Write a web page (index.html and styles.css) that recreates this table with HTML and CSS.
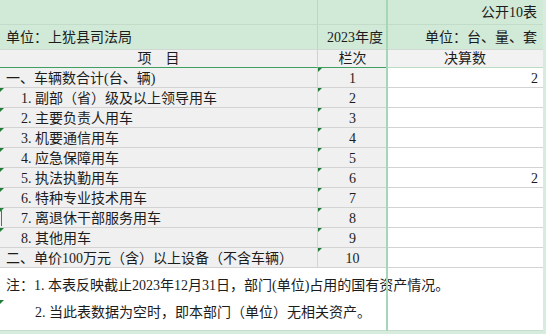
FILE: index.html
```html
<!DOCTYPE html>
<html lang="zh-CN">
<head>
<meta charset="utf-8">
<title>公开10表</title>
<link rel="stylesheet" href="styles.css">
</head>
<body>
<div class="sheet">
  <div class="cell hdr a"></div>
  <div class="cell hdr b"></div>
  <div class="cell hdr c right">公开10表</div>
  <div class="edge"></div>

  <div class="cell hdr hdr2 a left">单位：上犹县司法局</div>
  <div class="cell hdr hdr2 b right">2023年度</div>
  <div class="cell hdr hdr2 c right">单位：台、量、套</div>
  <div class="edge"></div>

  <div class="cell head a center">项　目</div>
  <div class="cell head b center">栏次</div>
  <div class="cell head c center">决算数</div>
  <div class="edge"></div>

  <div class="cell body a left">一、车辆数合计(台、辆)</div>
  <div class="cell body b center mark">1</div>
  <div class="cell val c right">2</div>
  <div class="edge"></div>

  <div class="cell body a left indent mark">1. 副部（省）级及以上领导用车</div>
  <div class="cell body b center mark">2</div>
  <div class="cell val c right"></div>
  <div class="edge"></div>

  <div class="cell body a left indent mark">2. 主要负责人用车</div>
  <div class="cell body b center mark">3</div>
  <div class="cell val c right"></div>
  <div class="edge"></div>

  <div class="cell body a left indent mark">3. 机要通信用车</div>
  <div class="cell body b center mark">4</div>
  <div class="cell val c right"></div>
  <div class="edge"></div>

  <div class="cell body a left indent mark">4. 应急保障用车</div>
  <div class="cell body b center mark">5</div>
  <div class="cell val c right"></div>
  <div class="edge"></div>

  <div class="cell body a left indent mark">5. 执法执勤用车</div>
  <div class="cell body b center mark">6</div>
  <div class="cell val c right">2</div>
  <div class="edge"></div>

  <div class="cell body a left indent mark">6. 特种专业技术用车</div>
  <div class="cell body b center mark">7</div>
  <div class="cell val c right"></div>
  <div class="edge"></div>

  <div class="cell body a left indent mark bar">7. 离退休干部服务用车</div>
  <div class="cell body b center mark">8</div>
  <div class="cell val c right"></div>
  <div class="edge"></div>

  <div class="cell body a left indent mark">8. 其他用车</div>
  <div class="cell body b center mark">9</div>
  <div class="cell val c right"></div>
  <div class="edge"></div>

  <div class="cell body a left">二、单价100万元（含）以上设备（不含车辆）</div>
  <div class="cell body b center mark">10</div>
  <div class="cell val c right"></div>
  <div class="edge"></div>

  <div class="cell note note1 left">注：1. 本表反映截止2023年12月31日，部门(单位)占用的国有资产情况。</div>
  <div class="edge"></div>

  <div class="cell note note2 left mark">2. 当此表数据为空时，即本部门（单位）无相关资产。</div>
  <div class="edge"></div>

  <div class="col-highlight"></div>
</div>
</body>
</html>
```

FILE: styles.css
```css
* { box-sizing: border-box; }

html, body {
  margin: 0;
  padding: 0;
  background: #d6ecdd;
}

.sheet {
  position: relative;
  width: 546px;
  height: 334px;
  display: grid;
  grid-template-columns: 317px 70px 156px 3px;
  grid-template-rows: 25px 25px 18px repeat(10, 20px) 32px 31px 3px;
  background: #d6ecdd;
  font-family: "Liberation Serif", "Noto Sans CJK SC", serif;
  font-size: 14px;
  color: #1c1c1c;
  overflow: hidden;
}

.cell {
  position: relative;
  display: flex;
  align-items: center;
  white-space: nowrap;
  overflow: visible;
  padding: 0 4px;
  line-height: 1;
}

.edge { background: #d6ecdd; }

.left { justify-content: flex-start; }
.right { justify-content: flex-end; }
.center { justify-content: center; }

.hdr {
  background: #d1e9d7;
  border-bottom: 1px solid #c3dcca;
  align-items: flex-end;
  padding-bottom: 4px;
}
.hdr.a { border-right: 0; padding-left: 6px; }
.hdr.b { border-left: 1px solid #bfd6c5; }
.hdr2 { border-bottom: 1px solid #d2d8d3; }
.hdr.c { padding-right: 6px; }

.head {
  background: #f0f0f0;
  border-bottom: 1px solid #3f9f60;
  padding-top: 1px;
}
.head.b { border-left: 1px solid #d0d0d0; }
.head.c { background: #f2f2f2; border-bottom-color: #b9dcc4; }

.body {
  background: #f0f0f0;
  border-bottom: 1px solid #d3d3d3;
  padding-top: 2px;
}
.body.a { padding-left: 6px; z-index: 1; overflow: visible; }
.body.b { border-left: 1px solid #d3d3d3; background: #f0f0f0; }
.indent { padding-left: 21px !important; }

.val {
  background: #ffffff;
  border-bottom: 1px solid #d3d3d3;
  padding-right: 5px;
  padding-top: 2px;
}

.mark::before {
  content: "";
  position: absolute;
  left: 0;
  top: 0;
  width: 0;
  height: 0;
  border-top: 4px solid #1f7d37;
  border-right: 4px solid transparent;
}
.body.b.mark::before { left: 0; }

.bar::after {
  content: "";
  position: absolute;
  left: 1px;
  top: 0;
  width: 1px;
  height: 18px;
  background: #2f8a45;
}

.note {
  grid-column: 1 / 4;
  background: #ffffff;
  padding-left: 6px;
}
.note1 { padding-top: 3px; }
.note2 { padding-left: 35px; padding-bottom: 4px; border-bottom: 1px solid #c9dccf; }

.col-highlight {
  position: absolute;
  left: 386px;
  top: 0;
  width: 2px;
  height: 331px;
  background: #a4d6b7;
  z-index: 2;
}
```
